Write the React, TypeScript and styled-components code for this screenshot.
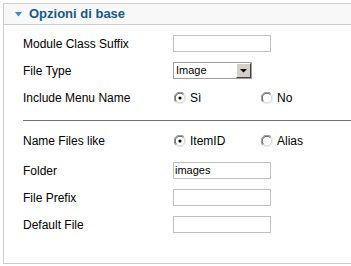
import React from "react";
import styled, { createGlobalStyle } from "styled-components";

const Global = createGlobalStyle`
  html, body {
    margin: 0;
    padding: 0;
    background: #ffffff;
    overflow: hidden;
    width: 351px;
    height: 266px;
  }
  body {
    font-family: "Liberation Sans", Arial, sans-serif;
    color: #000;
  }
`;

const Page = styled.div`
  padding: 3px 0 0 3px;
`;

const Panel = styled.div`
  width: 348px;
  height: 261px;
  box-sizing: border-box;
  border: 1px solid #cccccc;
  border-right: none;
  display: flex;
  flex-direction: column;
`;

const Header = styled.div`
  height: 20px;
  background: #f8f8f8;
  border-bottom: 1px solid #cccccc;
  display: flex;
  align-items: center;
  padding-left: 11px;
  gap: 7px;
`;

const Title = styled.span`
  font-size: 13px;
  font-weight: bold;
  color: #175a8a;
  line-height: 20px;
`;

const Content = styled.div`
  padding: 5px 0 0 19px;
  display: flex;
  flex-direction: column;
`;

const Row = styled.div<{ $gapAfter?: number }>`
  display: grid;
  grid-template-columns: 150px 1fr;
  align-items: center;
  height: 27px;
  margin-bottom: ${(p) => p.$gapAfter ?? 0}px;
`;

const Label = styled.span`
  font-size: 12px;
  line-height: 14px;
`;

const TextInput = styled.div`
  box-sizing: border-box;
  width: 98px;
  height: 17px;
  border: 1px solid #c0c0c0;
  font-size: 11px;
  line-height: 15px;
  padding-left: 1px;
  background: #fff;
`;

const Select = styled.div`
  box-sizing: border-box;
  width: 79px;
  height: 17px;
  border: 1px solid #a0a0a0;
  display: flex;
  align-items: stretch;
  background: #fff;
`;

const SelectText = styled.span`
  flex: 1;
  font-size: 11px;
  line-height: 15px;
  padding-left: 2px;
`;

const SelectButton = styled.span`
  box-sizing: border-box;
  width: 15px;
  background: #d4d0c8;
  border-top: 1px solid #ffffff;
  border-left: 1px solid #ffffff;
  border-right: 1px solid #404040;
  border-bottom: 1px solid #404040;
  display: flex;
  align-items: center;
  justify-content: center;
`;

const RadioGroup = styled.div`
  display: flex;
  padding-left: 1px;
`;

const RadioOption = styled.label`
  width: 87px;
  display: flex;
  align-items: center;
  gap: 4px;
  font-size: 12px;
`;

const Separator = styled.div`
  height: 16px;
  display: flex;
  flex-direction: column;
  justify-content: flex-start;
  padding-top: 9px;
  box-sizing: border-box;
`;

const Line = styled.div`
  height: 0;
  border-top: 1px solid #707070;
`;

const Triangle = () => (
  <svg width="7" height="5" viewBox="0 0 7 5">
    <polygon points="0,0 7,0 3.5,4.5" fill="#3f8cc8" />
  </svg>
);

const Arrow = () => (
  <svg width="7" height="4" viewBox="0 0 7 4">
    <polygon points="0,0 7,0 3.5,3.5" fill="#000" />
  </svg>
);

const Radio = ({ checked }: { checked?: boolean }) => (
  <svg width="12" height="12" viewBox="0 0 12 12">
    <circle cx="6" cy="6" r="5.5" fill="#ffffff" />
    <path d="M1.8 10.2 A5.5 5.5 0 0 1 10.2 1.8" stroke="#909090" strokeWidth="1" fill="none" />
    <path d="M10.2 1.8 A5.5 5.5 0 0 1 1.8 10.2" stroke="#e8e8e8" strokeWidth="1" fill="none" />
    <path d="M2.6 9.4 A4.4 4.4 0 0 1 9.4 2.6" stroke="#505050" strokeWidth="1" fill="none" />
    <path d="M9.4 2.6 A4.4 4.4 0 0 1 2.6 9.4" stroke="#d8d8d8" strokeWidth="1" fill="none" />
    {checked && <circle cx="6" cy="6" r="1.6" fill="#000" />}
  </svg>
);

export default function App() {
  return (
    <Page>
      <Global />
      <Panel>
        <Header>
          <Triangle />
          <Title>Opzioni di base</Title>
        </Header>
        <Content>
          <Row>
            <Label>Module Class Suffix</Label>
            <TextInput />
          </Row>
          <Row>
            <Label>File Type</Label>
            <Select>
              <SelectText>Image</SelectText>
              <SelectButton>
                <Arrow />
              </SelectButton>
            </Select>
          </Row>
          <Row>
            <Label>Include Menu Name</Label>
            <RadioGroup>
              <RadioOption>
                <Radio checked />
                Sì
              </RadioOption>
              <RadioOption>
                <Radio />
                No
              </RadioOption>
            </RadioGroup>
          </Row>
          <Separator>
            <Line />
          </Separator>
          <Row $gapAfter={3}>
            <Label>Name Files like</Label>
            <RadioGroup>
              <RadioOption>
                <Radio checked />
                ItemID
              </RadioOption>
              <RadioOption>
                <Radio />
                Alias
              </RadioOption>
            </RadioGroup>
          </Row>
          <Row>
            <Label>Folder</Label>
            <TextInput>images</TextInput>
          </Row>
          <Row>
            <Label>File Prefix</Label>
            <TextInput />
          </Row>
          <Row>
            <Label>Default File</Label>
            <TextInput />
          </Row>
        </Content>
      </Panel>
    </Page>
  );
}
